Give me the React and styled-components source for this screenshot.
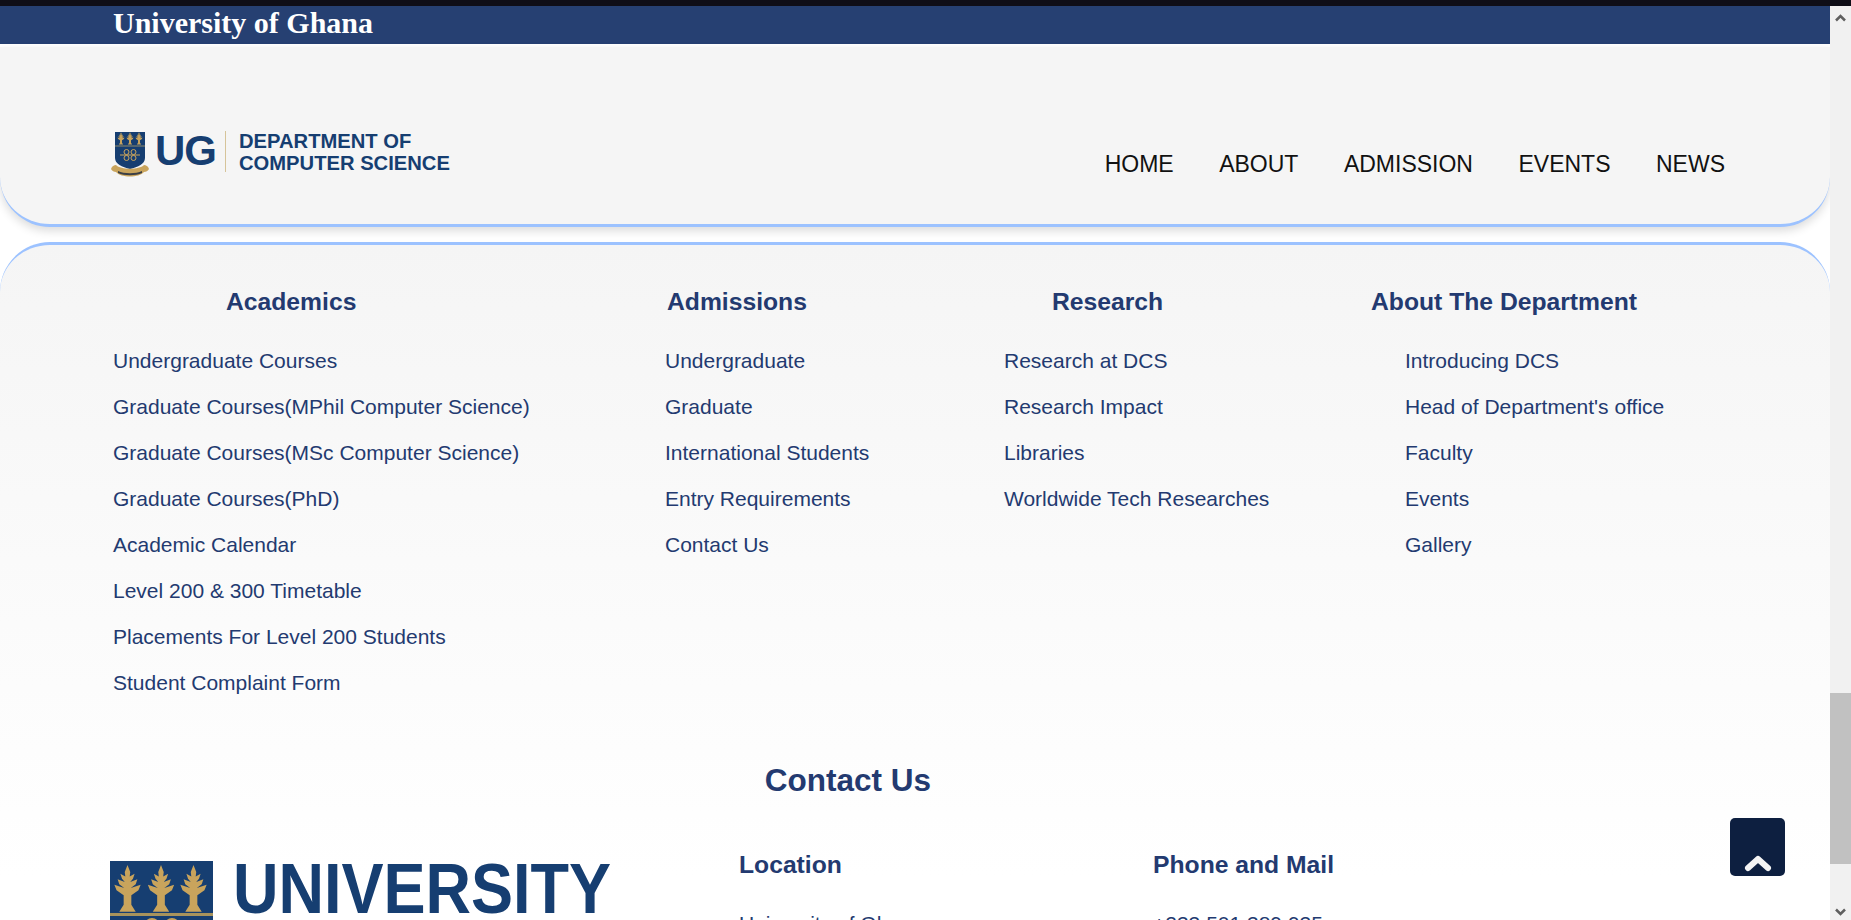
import React from 'react';
import styled, { createGlobalStyle } from 'styled-components';

const academics = [
  'Undergraduate Courses',
  'Graduate Courses(MPhil Computer Science)',
  'Graduate Courses(MSc Computer Science)',
  'Graduate Courses(PhD)',
  'Academic Calendar',
  'Level 200 & 300 Timetable',
  'Placements For Level 200 Students',
  'Student Complaint Form'
];
const admissions = ['Undergraduate', 'Graduate', 'International Students', 'Entry Requirements', 'Contact Us'];
const research = ['Research at DCS', 'Research Impact', 'Libraries', 'Worldwide Tech Researches'];
const about = ['Introducing DCS', "Head of Department's office", 'Faculty', 'Events', 'Gallery'];
const navItems = ['HOME', 'ABOUT', 'ADMISSION', 'EVENTS', 'NEWS'];

const GlobalStyle = createGlobalStyle`
  html, body {
    margin: 0;
    height: 920px;
    overflow: hidden;
    background: #fff;
    font-family: "Liberation Sans", Arial, sans-serif;
  }
`;

const Viewport = styled.div`
  display: flex;
  flex-direction: column;
  width: 1851px;
  height: 920px;
  overflow: hidden;
  position: relative;
`;

const BrowserEdge = styled.div`
  height: 6px;
  flex: none;
  background: #0f0e17;
`;

const Body = styled.div`
  display: flex;
  flex: 1;
  min-height: 0;
`;

const Page = styled.main`
  flex: 1;
  min-width: 0;
  overflow: hidden;
  background: #fff;
`;

const TopStrip = styled.div`
  height: 38px;
  background: #264072;
  padding-left: 113px;
  color: #fff;
  font-family: "Liberation Serif", "Times New Roman", serif;
  font-size: 30px;
  font-weight: 700;
  line-height: 33px;
`;

const Header = styled.header`
  margin-top: 3px;
  height: 177px;
  display: flex;
  justify-content: space-between;
  background: #f5f5f5;
  border-bottom: 3px solid #9cc2ff;
  border-radius: 0 0 50px 50px;
  box-shadow: 0 4px 10px rgba(0, 0, 0, 0.14);
  padding: 0 105px 0 111px;
`;

const Brand = styled.div`
  display: flex;
  align-items: flex-start;
  padding-top: 85px;
`;

const UgMark = styled.span`
  margin: -5px 0 0 6px;
  color: #163e71;
  font-size: 42px;
  font-weight: 700;
  line-height: 48px;
  letter-spacing: -1px;
`;

const BrandRule = styled.span`
  width: 1px;
  height: 41px;
  margin: -1px 13px 0 9px;
  background: #d6c49a;
`;

const BrandName = styled.span`
  margin-top: -2px;
  color: #163e71;
  font-size: 20.2px;
  font-weight: 700;
  line-height: 22px;
`;

const Nav = styled.nav`
  display: flex;
  gap: 45.5px;
  padding-top: 104px;
`;

const NavLink = styled.a`
  color: #111;
  font-size: 23px;
  line-height: 27px;
`;

const Footer = styled.footer`
  margin-top: 15px;
  height: 700px;
  background: linear-gradient(#f5f5f5, #fff 85%);
  border-top: 3px solid #9cc2ff;
  border-radius: 50px 50px 0 0;
  padding-top: 43px;
`;

const Columns = styled.div`
  display: grid;
  grid-template-columns: 552px 339px 367px 1fr;
  padding-left: 113px;
  height: 474px;
`;

const ColumnTitle = styled.h3`
  margin: 0 0 33px ${props => props.$indent}px;
  color: #233a70;
  font-size: 24.7px;
  font-weight: 700;
  line-height: 28px;
`;

const LinkList = styled.ul`
  margin: 0;
  padding: 0 0 0 ${props => props.$indent || 0}px;
  list-style: none;
  display: flex;
  flex-direction: column;
  gap: 22px;
`;

const FooterLink = styled.li`
  color: #233a70;
  font-size: 21px;
  line-height: 24px;
`;

const ContactTitle = styled.h2`
  margin: 0;
  width: 1696px;
  text-align: center;
  color: #233a70;
  font-size: 31.5px;
  font-weight: 700;
  line-height: 37px;
`;

const ContactRow = styled.div`
  display: grid;
  grid-template-columns: 629px 414px 1fr;
  padding: 52px 0 0 110px;
`;

const UniversityLogo = styled.div`
  display: flex;
  gap: 20px;
  padding-top: 10px;
`;

const UniversityWord = styled.span`
  margin-top: 2px;
  color: #163e71;
  font-size: 70px;
  font-weight: 700;
  line-height: 52px;
  transform: scaleX(0.9);
  transform-origin: left center;
`;

const ContactHeading = styled.h4`
  margin: 0 0 33px;
  color: #233a70;
  font-size: 24.7px;
  font-weight: 700;
  line-height: 28px;
`;

const ContactText = styled.p`
  margin: 0;
  color: #233a70;
  font-size: 21px;
  line-height: 24px;
`;

const Scrollbar = styled.div`
  width: 21px;
  flex: none;
  position: relative;
  background: #f1f1f1;
`;

const ScrollArrow = styled.svg`
  position: absolute;
  left: 5px;
  ${props => (props.$down ? 'bottom: 4px;' : 'top: 8px;')}
`;

const ScrollThumb = styled.div`
  position: absolute;
  top: 687px;
  left: 0;
  right: 0;
  height: 171px;
  background: #c1c1c1;
`;

const BackToTop = styled.button`
  position: absolute;
  left: 1730px;
  top: 818px;
  width: 55px;
  height: 58px;
  padding: 0;
  border: 0;
  border-radius: 5px;
  background: #0d1f40;
  display: flex;
  align-items: flex-end;
  justify-content: center;
`;

const Wheat = ({ x, y, s = 1 }) => (
  <g transform={`translate(${x} ${y}) scale(${s})`} fill="#c9a45c">
    <path d="M0-10 1-7.500 .8-5.800 2.600-6.800 2-5 1-3.800 3.600-4.800 3-3 1.200-1.600 4.800-2.800 4-.8 1.400 1 1.400 4.500 3 7H-3L-1.400 4.500V1L-4-.8-4.800-2.800-1.200-1.600-3-3-3.600-4.800-1-3.800-2-5-2.600-6.800-.8-5.800-1-7.500Z" />
  </g>
);

const Crest = () => (
  <svg width="38" height="45" viewBox="0 0 38 45">
    <path d="M4 0H34V26C34 32 27 35 19 37C11 35 4 32 4 26Z" fill="#163e71" />
    <Wheat x={10} y={7.500} s={0.72} />
    <Wheat x={19} y={7.500} s={0.72} />
    <Wheat x={28} y={7.500} s={0.72} />
    <rect x="4" y="13.500" width="30" height="1" fill="#8f8a6a" />
    <g fill="none" stroke="#c9a45c" strokeWidth="1">
      <circle cx="15.500" cy="20" r="2.500" />
      <circle cx="22.500" cy="20" r="2.500" />
      <circle cx="15.500" cy="26" r="2.500" />
      <circle cx="22.500" cy="26" r="2.500" />
      <path d="M9 23H29" />
    </g>
    <path d="M0 37C1 34 3 33 5 33C10 38 28 38 33 33C35 33 37 34 38 37C37 39 35 40 33 40C28 46 10 46 5 40C3 40 1 39 0 37Z" fill="#c9a45c" />
    <path d="M7 39C13 42 25 42 31 39V41C25 44 13 44 7 41Z" fill="#3b3f45" />
  </svg>
);

const UniversityCrest = () => (
  <svg width="103" height="62" viewBox="0 0 103 62">
    <rect width="103" height="62" fill="#163e71" />
    <Wheat x={17.500} y={31.500} s={2.740} />
    <Wheat x={51} y={31.500} s={2.740} />
    <Wheat x={83.500} y={31.500} s={2.740} />
    <rect y="52" width="103" height="3" fill="#a8935c" />
    <circle cx="42" cy="65" r="7" fill="none" stroke="#c9a45c" strokeWidth="2" />
    <circle cx="62" cy="65" r="7" fill="none" stroke="#c9a45c" strokeWidth="2" />
  </svg>
);

const Column = ({ title, titleIndent, linkIndent, links }) => (
  <div>
    <ColumnTitle $indent={titleIndent}>{title}</ColumnTitle>
    <LinkList $indent={linkIndent}>
      {links.map(link => (
        <FooterLink key={link}>{link}</FooterLink>
      ))}
    </LinkList>
  </div>
);

const App = () => (
  <Viewport>
    <GlobalStyle />
    <BrowserEdge />
    <Body>
      <Page>
        <TopStrip>University of Ghana</TopStrip>
        <Header>
          <Brand>
            <Crest />
            <UgMark>UG</UgMark>
            <BrandRule />
            <BrandName>
              DEPARTMENT OF
              <br />
              COMPUTER SCIENCE
            </BrandName>
          </Brand>
          <Nav>
            {navItems.map(item => (
              <NavLink key={item}>{item}</NavLink>
            ))}
          </Nav>
        </Header>
        <Footer>
          <Columns>
            <Column title="Academics" titleIndent={113} links={academics} />
            <Column title="Admissions" titleIndent={2} links={admissions} />
            <Column title="Research" titleIndent={48} links={research} />
            <Column title="About The Department" titleIndent={0} linkIndent={34} links={about} />
          </Columns>
          <ContactTitle>Contact Us</ContactTitle>
          <ContactRow>
            <UniversityLogo>
              <UniversityCrest />
              <UniversityWord>UNIVERSITY</UniversityWord>
            </UniversityLogo>
            <div>
              <ContactHeading>Location</ContactHeading>
              <ContactText>University of Ghana</ContactText>
            </div>
            <div>
              <ContactHeading>Phone and Mail</ContactHeading>
              <ContactText>+233 501 389 935</ContactText>
            </div>
          </ContactRow>
        </Footer>
      </Page>
      <Scrollbar>
        <ScrollArrow width="11" height="8" viewBox="0 0 11 8">
          <path d="M1 6.500 5.500 2 10 6.500" fill="none" stroke="#5f5f5f" strokeWidth="2.500" />
        </ScrollArrow>
        <ScrollThumb />
        <ScrollArrow $down width="11" height="8" viewBox="0 0 11 8">
          <path d="M1 1.500 5.500 6 10 1.500" fill="none" stroke="#5f5f5f" strokeWidth="2.500" />
        </ScrollArrow>
      </Scrollbar>
    </Body>
    <BackToTop aria-label="Back to top">
      <svg width="28" height="22" viewBox="0 0 28 22">
        <path d="M4 14 14 5 24 14" fill="none" stroke="#f4f4f4" strokeWidth="6" strokeLinecap="round" strokeLinejoin="round" />
      </svg>
    </BackToTop>
  </Viewport>
);

export default App;
